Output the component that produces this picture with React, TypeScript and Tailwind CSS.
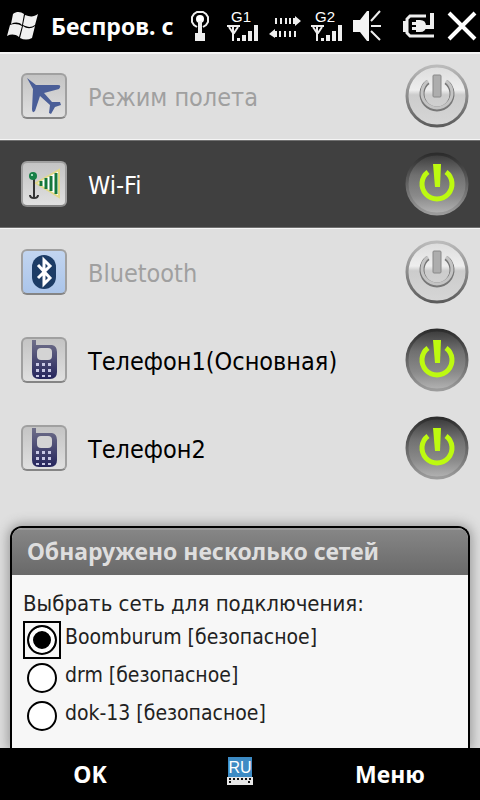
import React, { useState } from 'react'

type Device = {
  id: string
  label: string
  on: boolean
  dim?: boolean
  selected?: boolean
  icon: React.ReactNode
}

const networks = ['Boomburum', 'drm', 'dok-13']

function WindowsFlag() {
  return (
    <svg width="32" height="30" viewBox="0 0 32 30" fill="#f0f0f0" aria-hidden="true">
      <path d="M6 3C10 0 14 1 17 3L15 14C12 11 8 11 4 13Z" />
      <path d="M18 4C23 6 27 6 31 3L28 14C24 17 20 16 16 14Z" />
      <path d="M3 14C7 12 12 13 15 15L12 26C8 23 4 23 0 25Z" />
      <path d="M16 15C20 18 24 18 28 15L25 27C21 29 17 29 13 27Z" />
    </svg>
  )
}

function Beacon() {
  return (
    <svg width="20" height="32" viewBox="0 0 20 32" aria-hidden="true">
      <path d="M7 17L4 15L2 12V7L4 4L7 2H13L16 4L18 7V12L16 15L13 17" fill="none" stroke="#eee" strokeWidth="2" />
      <circle cx="10" cy="9" r="4" fill="#fff" />
      <path d="M8 11h4v12h3v8H5v-8h3z" fill="#eee" />
    </svg>
  )
}

function Signal({ name }: { name: string }) {
  return (
    <svg width="34" height="40" viewBox="0 -4 34 40" aria-hidden="true">
      <text x="5" y="12" fill="#fff" className="font-['Liberation_Sans'] text-[15px]">
        {name}
      </text>
      <path d="M1 16h13M3 17l4 6h1l4-6M7 16v15" fill="none" stroke="#eee" strokeWidth="2" />
      <path d="M11 28h3v3h-3zM16 25h4v6h-4zM22 21h4v10h-4zM28 15h4v16h-4z" fill="#eee" />
    </svg>
  )
}

function Transfer() {
  return (
    <svg width="34" height="24" viewBox="0 0 34 24" fill="#eee" aria-hidden="true">
      <path d="M7 4h2v6H7zM12 4h2v6h-2zM17 4h2v6h-2zM21 4h2v6h-2zM25 4h2V2l6 5l-6 5v-2h-2z" />
      <path d="M7 15v2h2v6H7v1l-6-4zM11 17h2v6h-2zM16 17h2v6h-2zM21 17h2v6h-2zM26 17h2v6h-2z" />
    </svg>
  )
}

function Speaker() {
  return (
    <svg width="30" height="32" viewBox="0 0 30 32" aria-hidden="true">
      <path d="M1 10h7l7-9h2v30h-2l-7-9H1z" fill="#f4f4f4" />
      <path d="M19 11l9-10M19 16h10M19 21l9 9" stroke="#eee" strokeWidth="2" />
    </svg>
  )
}

function Charger() {
  return (
    <svg width="33" height="28" viewBox="0 0 33 28" aria-hidden="true">
      <path d="M24 4H8L5 7v14l3 3h24" fill="none" stroke="#eee" strokeWidth="3" />
      <path d="M30 1v14h-9" fill="none" stroke="#eee" strokeWidth="4" />
      <path d="M1 9h4v11H1zM14 8h4q6 0 6 6t-6 6h-4zM10 10h5v3h-5zM10 15h5v3h-5z" fill="#eee" />
    </svg>
  )
}

function Plane() {
  return (
    <svg width="40" height="40" viewBox="0 0 40 40" aria-hidden="true">
      <path d="M3 2L12 9L34 9Q38 9 35 13L20 17L28 26L36 26L37 29L31 31L27 38L25 37L26 29L16 20L11 35Q8 38 8 33L9 13Z" fill="#4a5e98" />
    </svg>
  )
}

function WifiMast() {
  return (
    <svg width="40" height="40" viewBox="0 0 40 40" aria-hidden="true">
      <path d="M12 19L35 6V33Z" fill="#fff" stroke="#e2d98a" strokeWidth="2" />
      <path d="M17 17v5M22 14v11M27 12v15M32 9v21" stroke="#14783c" strokeWidth="3" />
      <path d="M10 15v18M6 31q0 3 4 3t4-3" fill="none" stroke="#333" strokeWidth="2" />
      <circle cx="9" cy="12" r="4" fill="#178048" />
      <circle cx="8" cy="11" r="1" fill="#d5ffe5" />
    </svg>
  )
}

function BluetoothMark() {
  return (
    <svg width="40" height="40" viewBox="0 0 40 40" aria-hidden="true">
      <rect x="8" y="3" width="24" height="34" rx="12" fill="#1c3c66" />
      <path d="M14 13L26 26L20 32V8L26 14L14 26" fill="none" stroke="#fff" strokeWidth="3" />
    </svg>
  )
}

function Handset() {
  return (
    <svg width="40" height="40" viewBox="0 0 40 40" aria-hidden="true">
      <defs>
        <linearGradient id="shell" x1="0" y1="0" x2="0" y2="1">
          <stop offset="0" stopColor="#70708a" />
          <stop offset="1" stopColor="#25255c" />
        </linearGradient>
      </defs>
      <path d="M8 0h4v5h16q5 1 5 7v20q0 7-7 7H15q-7 0-7-7z" fill="url(#shell)" />
      <rect x="13" y="8" width="15" height="12" rx="4" fill="#d4d4d4" />
      <path
        d="M12 23h3v3h-3zM18 23h3v3h-3zM24 23h3v3h-3zM12 29h3v3h-3zM18 29h3v3h-3zM24 29h3v3h-3zM12 35h3v2h-3zM18 35h3v2h-3zM24 35h3v2h-3z"
        fill="#c8c8e4"
      />
    </svg>
  )
}

function PowerOff() {
  return (
    <svg width="64" height="64" viewBox="0 0 64 64" aria-hidden="true">
      <defs>
        <linearGradient id="offFace" x1="0" y1="0" x2="0" y2="1">
          <stop offset="0" stopColor="#dcdcdc" />
          <stop offset="0.4" stopColor="#eeeeee" />
          <stop offset="0.48" stopColor="#cccccc" />
          <stop offset="1" stopColor="#d6d6d6" />
        </linearGradient>
        <linearGradient id="offEdge" x1="0" y1="0" x2="0" y2="1">
          <stop offset="0" stopColor="#bbbbbb" />
          <stop offset="1" stopColor="#5c5c5c" />
        </linearGradient>
      </defs>
      <circle cx="32" cy="32" r="30" fill="url(#offFace)" stroke="url(#offEdge)" strokeWidth="3" />
      <path d="M23 18A15 15 0 1 0 41 18" fill="none" stroke="#777" strokeWidth="5" />
      <path d="M23 17A15 15 0 1 0 41 17" fill="none" stroke="#c4c4c4" strokeWidth="3" />
      <rect x="28" y="11" width="8" height="22" rx="1" fill="#adadad" stroke="#888" />
    </svg>
  )
}

function PowerOn() {
  return (
    <svg width="64" height="64" viewBox="0 0 64 64" aria-hidden="true">
      <defs>
        <linearGradient id="onFace" x1="0" y1="0" x2="0" y2="1">
          <stop offset="0" stopColor="#3a3a3a" />
          <stop offset="0.35" stopColor="#707070" />
          <stop offset="0.7" stopColor="#8a8a8a" />
          <stop offset="1" stopColor="#b4b4b4" />
        </linearGradient>
        <linearGradient id="onEdge" x1="0" y1="0" x2="0" y2="1">
          <stop offset="0" stopColor="#2c2c2c" />
          <stop offset="1" stopColor="#9c9c9c" />
        </linearGradient>
      </defs>
      <circle cx="32" cy="32" r="30" fill="url(#onFace)" stroke="url(#onEdge)" strokeWidth="3" />
      <path d="M23 20A15 15 0 1 0 41 20" fill="none" stroke="#bdfa10" strokeWidth="5" />
      <path d="M28 12h8l-1 23h-5z" fill="#bdfa10" />
    </svg>
  )
}

const initialDevices: Device[] = [
  { id: 'flight', label: 'Режим полета', on: false, dim: true, icon: <Plane /> },
  { id: 'wifi', label: 'Wi-Fi', on: true, selected: true, icon: <WifiMast /> },
  { id: 'bluetooth', label: 'Bluetooth', on: false, dim: true, icon: <BluetoothMark /> },
  { id: 'phone1', label: 'Телефон1(Основная)', on: true, icon: <Handset /> },
  { id: 'phone2', label: 'Телефон2', on: true, icon: <Handset /> },
]

function StatusBar() {
  return (
    <header className="flex h-[52px] items-center bg-black pr-[3px] pl-[7px] font-['Noto_Sans',sans-serif] text-white">
      <WindowsFlag />
      <h1 className="ml-3 flex-1 text-[23px] leading-8 font-bold whitespace-nowrap">Беспров. с</h1>
      <div className="flex items-center gap-4">
        <Beacon />
        <div className="flex items-center gap-2">
          <Signal name="G1" />
          <Transfer />
          <Signal name="G2" />
          <Speaker />
        </div>
        <div className="flex items-center gap-3 pl-1">
          <Charger />
          <button type="button" aria-label="Закрыть">
            <svg width="30" height="30" viewBox="0 0 30 30" aria-hidden="true">
              <path d="M2 2l26 26M28 2L2 28" stroke="#fff" strokeWidth="4" />
            </svg>
          </button>
        </div>
      </div>
    </header>
  )
}

function DeviceRow({ device, onToggle }: { device: Device; onToggle: () => void }) {
  const row = device.selected
    ? 'border-y border-[#707070] bg-[#404040] text-white shadow-[0_0_0_1px_#f5f5f5]'
    : device.dim
      ? 'text-[#a0a0a0]'
      : 'text-black'
  const tile = device.id === 'bluetooth' ? 'from-[#c2d5f0] to-[#abc5ea]' : 'from-[#c4c4c4] to-[#e0e0e0]'
  return (
    <li className={`flex h-[88px] items-center pr-[11px] pl-[21px] ${row}`}>
      <span
        className={`flex size-[46px] items-center justify-center rounded-md border-2 border-[#a0a0a0] border-b-[#858585] bg-linear-to-b ${tile}`}
      >
        {device.icon}
      </span>
      <span className="ml-[21px] flex-1 pt-1 text-[25px] leading-8">{device.label}</span>
      <button type="button" aria-label={device.label} aria-pressed={device.on} onClick={onToggle} className="rounded-full">
        {device.on ? <PowerOn /> : <PowerOff />}
      </button>
    </li>
  )
}

function NetworkDialog() {
  const [network, setNetwork] = useState(networks[0])
  return (
    <section className="mx-[10px] mt-[34px] flex flex-1 flex-col overflow-hidden rounded-t-xl border-2 border-b-0 border-black bg-[#f7f7f7] shadow-[0_0_12px_2px_#999]">
      <h2 className="h-[47px] border-t-2 border-[#999] bg-linear-to-b from-[#868686] to-[#696969] pl-[15px] font-['Noto_Sans',sans-serif] text-[23px] leading-[42px] font-bold text-[#dedede]">
        Обнаружено несколько сетей
      </h2>
      <fieldset className="px-[11px] pt-3 text-[21px] text-[#222]">
        <legend className="float-left w-full text-[22px] leading-[34px]">Выбрать сеть для подключения:</legend>
        {networks.map((name) => (
          <label key={name} className="clear-both flex h-[38px] items-center gap-1">
            <span
              className={`flex size-[38px] items-center justify-center border-2 ${network === name ? 'border-black' : 'border-transparent'}`}
            >
              <input
                type="radio"
                name="network"
                checked={network === name}
                onChange={() => setNetwork(name)}
                className="size-[30px] appearance-none rounded-full border-2 border-black bg-white checked:bg-black checked:shadow-[inset_0_0_0_4px_#fff]"
              />
            </span>
            <span className="pb-1">{name} [безопасное]</span>
          </label>
        ))}
      </fieldset>
    </section>
  )
}

function SoftKeys() {
  return (
    <footer className="z-10 grid h-[52px] grid-cols-[1fr_120px_1fr] items-center bg-black font-['Noto_Sans',sans-serif] text-[23px] font-bold text-white">
      <button type="button">OK</button>
      <button type="button" aria-label="Клавиатура" className="flex justify-center pb-1">
        <svg width="28" height="30" viewBox="0 0 28 30" aria-hidden="true">
          <rect x="2" y="0" width="24" height="20" fill="#3d8bc4" />
          <text x="14" y="16" textAnchor="middle" fill="#fff" className="font-['Liberation_Sans'] text-base font-normal">
            RU
          </text>
          <path d="M1 20h26v8H1z" fill="#e8e8e8" />
          <path d="M3 22h23M3 25h3M22 25h3" stroke="#111" strokeWidth="2" strokeDasharray="2 2" />
        </svg>
      </button>
      <button type="button">Меню</button>
    </footer>
  )
}

function App() {
  const [devices, setDevices] = useState(initialDevices)

  const toggle = (id: string) => {
    setDevices(devices.map((d) => (d.id === id ? { ...d, on: !d.on } : d)))
  }

  return (
    <div className="flex min-h-screen flex-col bg-[#dfdfdf] font-['DejaVu_Sans_Condensed','DejaVu_Sans',sans-serif]">
      <StatusBar />
      <main className="flex flex-1 flex-col">
        <ul className="shadow-[inset_0_2px_0_#f5f5f5]">
          {devices.map((device) => (
            <DeviceRow key={device.id} device={device} onToggle={() => toggle(device.id)} />
          ))}
        </ul>
        <NetworkDialog />
      </main>
      <SoftKeys />
    </div>
  )
}

export default App
